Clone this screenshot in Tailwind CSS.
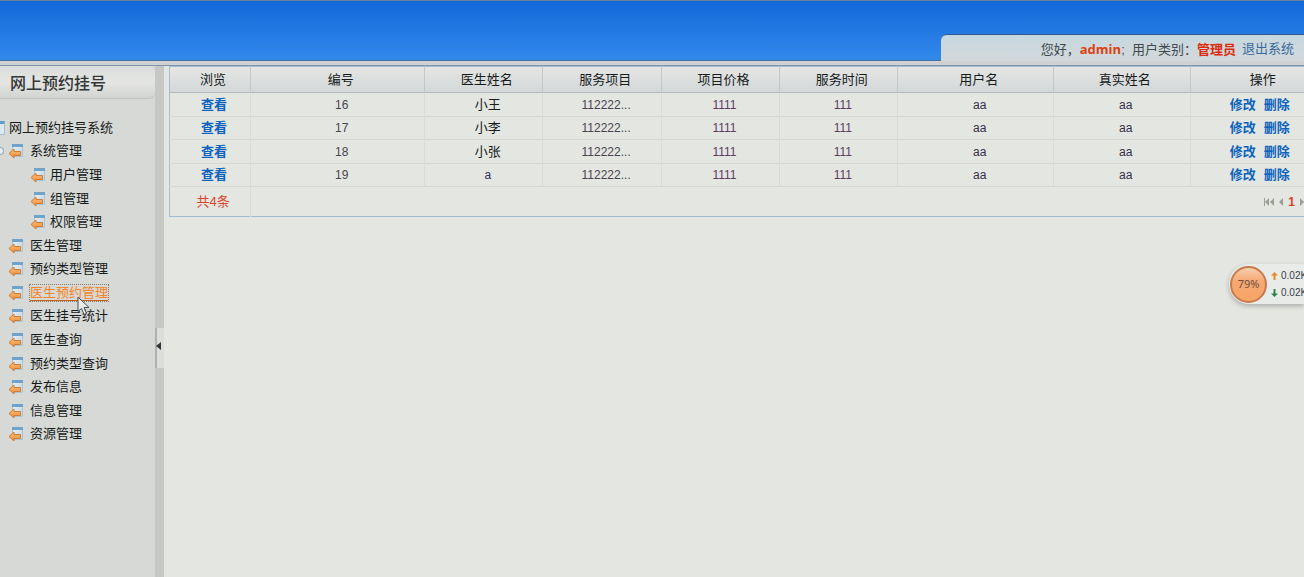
<!DOCTYPE html>
<html lang="zh-CN">
<head>
<meta charset="utf-8">
<meta name="viewport" content="width=device-width, initial-scale=1">
<title>网上预约挂号</title>
<script src="https://cdn.jsdelivr.net/npm/@tailwindcss/browser@4"></script>
</head>
<body class="flex h-screen flex-col overflow-hidden bg-[#e4e6e2] font-['Liberation_Sans','Noto_Sans_CJK_SC',sans-serif] text-[13px] leading-5 text-[#161b1b]">
<svg class="absolute size-0" aria-hidden="true">
  <defs>
    <linearGradient id="orange" x1="0" y1="0" x2="0" y2="1"><stop offset="0" stop-color="#ffc27c"/><stop offset="1" stop-color="#ee8a35"/></linearGradient>
    <linearGradient id="pane" x1="0" y1="0" x2="1" y2="1"><stop offset="0" stop-color="#eef2f2"/><stop offset="1" stop-color="#bdd3e2"/></linearGradient>
    <symbol id="node" viewBox="0 0 16 16">
      <path d="M4.500 1.500h10v12h-10z" fill="url(#pane)" stroke="#a9c3d5"/>
      <path d="M4 1h11v3H4z" fill="#6fa3cb"/>
      <path d="M1 10.500 6 6v2.500h6.500v4H6V15z" fill="url(#orange)" stroke="#cf7d33" stroke-linejoin="round"/>
    </symbol>
  </defs>
</svg>

<header class="flex h-[61px] shrink-0 items-end justify-end border-t border-b border-t-[#6b8096] border-b-[#4671a5] bg-linear-to-b from-[#1368da] to-[#3289ea]">
  <div class="-mb-px flex h-[27px] w-[363px] items-center justify-end gap-1.5 rounded-tl-md border-t border-[#31588a] bg-linear-to-b from-[#c5d8df] to-[#d3d8da] pr-2.5 pt-0.5 text-[#424a4e]">
    <span class="whitespace-nowrap">您好，<b class="font-['Open_Sans',sans-serif] font-bold text-[#dd4012]">admin</b>;&nbsp; 用户类别：<b class="text-[#dc2a08]">管理员</b></span>
    <a href="#" class="whitespace-nowrap text-[#386a9c]">退出系统</a>
  </div>
</header>
<div class="h-[5px] shrink-0 border-b border-[#7f94ad] bg-[#cfd1d3]"></div>

<div class="flex min-h-0 flex-1">
  <aside class="w-[155px] shrink-0 bg-[#d6d9d5]">
    <h1 class="flex h-[33px] items-center rounded-r-md border-b border-[#bfc2c0] bg-linear-to-b from-[#dadcda] via-[#e5e6e4] to-[#d1d4d2] pl-2.5 pt-1 text-base font-medium text-[#323636]">网上预约挂号</h1>
    <nav class="mt-[17px]" aria-label="系统菜单">
      <ul class="flex h-[330px] flex-col *:flex *:flex-1 *:items-center *:gap-1 *:whitespace-nowrap">
        <li><span class="h-3.5 w-[5px] border-t-3 border-r border-b border-t-[#5f9ccb] border-r-[#9fbfd6] border-b-[#9fbfd6] bg-[#dce8ee]"></span><a href="#">网上预约挂号系统</a></li>
        <li><button aria-label="折叠" class="h-2 w-1 rounded-r-sm border border-l-0 border-[#8ea6b8] bg-[#e8eef0]"></button><svg class="size-4"><use href="#node"/></svg><a href="#" class="ml-0.5">系统管理</a></li>
        <li class="pl-[30px]"><svg class="size-4"><use href="#node"/></svg><a href="#">用户管理</a></li>
        <li class="pl-[30px]"><svg class="size-4"><use href="#node"/></svg><a href="#">组管理</a></li>
        <li class="pl-[30px]"><svg class="size-4"><use href="#node"/></svg><a href="#">权限管理</a></li>
        <li class="pl-2"><svg class="size-4"><use href="#node"/></svg><a href="#" class="ml-0.5">医生管理</a></li>
        <li class="pl-2"><svg class="size-4"><use href="#node"/></svg><a href="#" class="ml-0.5">预约类型管理</a></li>
        <li class="relative pl-2"><svg class="size-4"><use href="#node"/></svg><a href="#" aria-current="page" class="ml-0.5 h-4 leading-4 text-[#f58426] outline-1 outline-dotted outline-[#8a7a68] shadow-[inset_0_-1px_#c4621e]">医生预约管理</a>
          <svg class="absolute top-[15px] left-[77px] z-10 h-5 w-3.5" viewBox="0 0 14 20" aria-hidden="true"><path d="M1 1v14.500l3.500-3 2.500 6 2.500-1-2.500-6h5z" fill="#e9ebe9" stroke="#4a4e50"/></svg></li>
        <li class="pl-2"><svg class="size-4"><use href="#node"/></svg><a href="#" class="ml-0.5">医生挂号统计</a></li>
        <li class="pl-2"><svg class="size-4"><use href="#node"/></svg><a href="#" class="ml-0.5">医生查询</a></li>
        <li class="pl-2"><svg class="size-4"><use href="#node"/></svg><a href="#" class="ml-0.5">预约类型查询</a></li>
        <li class="pl-2"><svg class="size-4"><use href="#node"/></svg><a href="#" class="ml-0.5">发布信息</a></li>
        <li class="pl-2"><svg class="size-4"><use href="#node"/></svg><a href="#" class="ml-0.5">信息管理</a></li>
        <li class="pl-2"><svg class="size-4"><use href="#node"/></svg><a href="#" class="ml-0.5">资源管理</a></li>
      </ul>
    </nav>
  </aside>
  <div class="flex w-[9px] shrink-0 flex-col justify-center bg-[#c6c8c5] pt-[52px]">
    <button aria-label="收起菜单" class="flex h-10 items-center justify-center border-l-2 border-[#aeb1b1] bg-[#dcdedb] pr-1 pb-1"><svg class="h-2 w-[5px] shrink-0" viewBox="0 0 5 8"><path d="M5 0v8L0 4z" fill="#303434"/></svg></button>
  </div>
  <main class="min-w-0 flex-1 overflow-hidden pl-[5px]">
    <table class="w-[calc(100%+26px)] table-fixed border-collapse border border-[#a3bcd6] text-center">
      <colgroup><col class="w-[7%]"><col class="w-[15%]"><col class="w-[10.200%]"><col class="w-[10.200%]"><col class="w-[10.200%]"><col class="w-[10.200%]"><col class="w-[13.400%]"><col class="w-[11.800%]"><col class="w-[12%]"></colgroup>
      <thead>
        <tr class="h-[26px] border-b border-[#b4b9bb] bg-linear-to-b from-[#e5e6e4] via-[#dcdfde] to-[#d3d7d8] *:border-r *:border-[#c2c7c9] *:p-0 *:pl-1.5 *:font-normal">
          <th>浏览</th><th>编号</th><th>医生姓名</th><th>服务项目</th><th>项目价格</th><th>服务时间</th><th>用户名</th><th>真实姓名</th><th>操作</th>
        </tr>
      </thead>
      <tbody id="rows"></tbody>
      <tfoot>
        <tr class="h-[30px] border-b border-[#a3bcd6]">
          <td class="border-r border-[#d9dbd8] border-b-[#a3bcd6] p-0 pl-1.5 text-[#d9452b]">共4条</td>
          <td colspan="8" class="p-0">
            <div class="flex items-center justify-end gap-[5px] pr-2.5">
              <button aria-label="首页"><svg class="h-2 w-2.5" viewBox="0 0 10 8" fill="#9b9f98"><path d="M0 0h1v8H0zM5 0v8L1 4zM10 0v8L6 4z"/></svg></button>
              <button aria-label="上一页"><svg class="h-2 w-1" viewBox="0 0 4 8" fill="#9b9f98"><path d="M4 0v8L0 4z"/></svg></button>
              <b class="text-xs text-[#d9401f]">1</b>
              <button aria-label="下一页"><svg class="h-2 w-1" viewBox="0 0 4 8" fill="#9b9f98"><path d="M0 0v8l4-4z"/></svg></button>
              <button aria-label="末页"><svg class="h-2 w-2.5" viewBox="0 0 10 8" fill="#9b9f98"><path d="M0 0v8l4-4zM5 0v8l4-4zM9 0h1v8H9z"/></svg></button>
            </div>
          </td>
        </tr>
      </tfoot>
    </table>
  </main>
</div>

<!-- Floating network monitor -->
<div class="absolute top-[264px] right-0 flex h-10 w-[75px] items-center gap-1 overflow-hidden rounded-l-full bg-[#e9ebe9] pl-px shadow-[0_2px_5px_#00000040]">
  <div class="flex size-[37px] shrink-0 items-center justify-center rounded-full border-2 border-[#c77a4b] bg-linear-to-b from-[#f6cfae] via-[#f6a772] via-40% to-[#f7a467] font-['Noto_Sans',sans-serif] text-[11px] text-[#71503b]">79%</div>
  <div class="flex flex-col text-[10px] leading-[17px] text-[#36424a]">
    <span class="flex items-center gap-[3px] whitespace-nowrap"><svg class="h-2 w-[7px] shrink-0" viewBox="0 0 7 8"><path d="M3.500 0 7 3.500H4.500V8h-2V3.500H0z" fill="#e48a29"/></svg>0.02K</span>
    <span class="flex items-center gap-[3px] whitespace-nowrap"><svg class="h-2 w-[7px] shrink-0" viewBox="0 0 7 8"><path d="M3.500 8 7 4.500H4.500V0h-2v4.500H0z" fill="#2d8448"/></svg>0.02K</span>
  </div>
</div>

<script>
  const records = [[16, '小王'], [17, '小李'], [18, '小张'], [19, 'a']];
  document.getElementById('rows').innerHTML = records.map(([id, name], i) => `
    <tr class="${i % 2 ? 'h-[23px]' : 'h-6'} border-b border-[#d5d8d4] *:border-r *:border-[#d9dbd8] *:p-0 *:pl-2">
      <td><a href="#" class="font-bold text-[#0c63bd]">查看</a></td>
      <td class="text-xs text-[#4a434e]">${id}</td>
      <td class="${name === 'a' ? 'text-xs text-[#35305a]' : ''}">${name}</td>
      <td class="text-xs text-[#4a434e]">112222...</td>
      <td class="text-xs text-[#5c3d5c]">1111</td>
      <td class="text-xs text-[#5c3d5c]">111</td>
      <td class="text-xs text-[#35304a]">aa</td>
      <td class="text-xs text-[#35304a]">aa</td>
      <td><span class="inline-flex gap-2 pr-3 -mr-1 font-bold text-[#0c63bd]"><a href="#">修改</a><a href="#">删除</a></span></td>
    </tr>`).join('');
</script>
</body>
</html>
